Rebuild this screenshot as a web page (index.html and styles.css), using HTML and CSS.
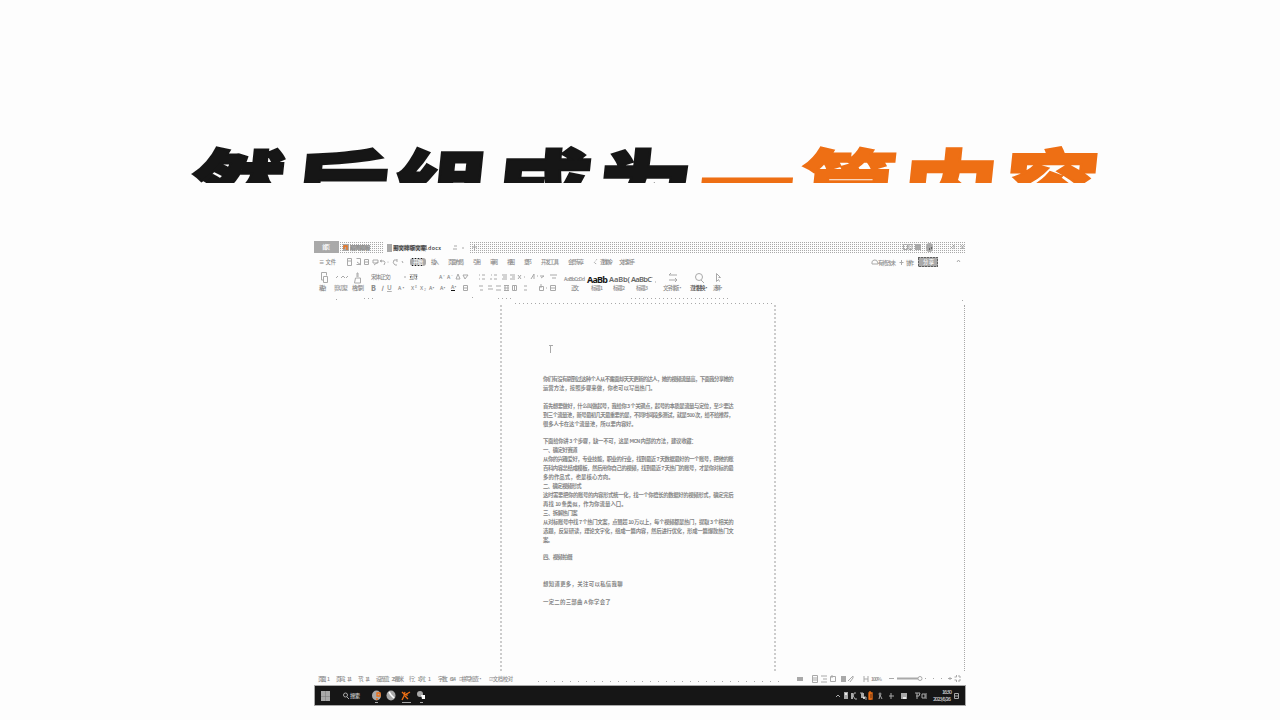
FILE: index.html
```html
<!DOCTYPE html>
<html lang="zh-CN">
<head>
<meta charset="utf-8">
<title>然后组成为一篇内容</title>
<link rel="stylesheet" href="styles.css">
</head>
<body>
<h1 class="headline"><span class="headline-text">然后组成为<span class="accent">一篇内容</span></span></h1>
<main class="window">
<svg class="titlebar" width="651" height="13" viewBox="314 241 651 13">
<defs><pattern id="rows" width="2" height="2" patternUnits="userSpaceOnUse"><path d="M0 0h1v1h-1z" fill="#a9a9a9"/></pattern></defs>
<path class="fill" d="M314 241h25v12h-25z"/><text class="white" x="322" y="249" textLength="8">首页</text>
<path fill="url(#rows)" d="M339 242h44v11h-44zM469 242h496v11h-496z"/>
<path class="fill" d="M343 244h6v7h-6zM387 244h5v8h-5zM350 245h20v5h-20z"/><path class="orange-line" d="M344 249v-3h3v4"/>
<text x="350" y="250" textLength="20">稻壳模板</text>
<path class="fill" d="M394 245h33v5h-33z"/><text class="dark" x="393" y="250" textLength="48">图文排版文案.docx</text>
<path class="line" d="M454 246h3M453 249h4M462 248h2M472 247h5M474.5 244v6M903.500 244.500h4v5h-4zM909 244.500h3v5h-3zM950 249l4-4v4M961 245l3 4M964 245l-3 4"/>
<path class="fill" d="M915 244h6v6h-6z"/><ellipse class="fill" cx="929.500" cy="247.500" rx="3.500" ry="4.500"/><path class="mark" d="M929 249h1M931 248h1"/>
</svg>
<svg class="menubar" width="651" height="15" viewBox="314 254 651 15">
<text x="319" y="264.500" textLength="17">≡ 文件</text>
<path class="line" d="M347.500 258.500h4v7h-4zM348 261h3M356.500 258.500h4v6h-4M357 262l4 3M364.500 259.500h4v5h-4zM364 262h5M373 260h5v3h-5zM374 265l4-3M382 260l-2 1 2 1M380 261h4q2 1 0 4M397 260h-3q-2 3 1 5h2M397 259v3M402 261l1 2"/>
<circle class="fill" cx="388" cy="262" r=".6"/>
<rect class="fill" x="410" y="258" width="16" height="8" rx="3"/><path class="dashes" d="M412 258.500h12M412 265.500h12"/><text class="white" x="413" y="264.500" textLength="10">开始</text>
<text x="431" y="264.500" textLength="8">插入</text><text x="448" y="264.500" textLength="16">页面布局</text><text x="473" y="264.500" textLength="8">引用</text><text x="490" y="264.500" textLength="8">审阅</text><text x="507" y="264.500" textLength="8">视图</text><text x="524" y="264.500" textLength="8">章节</text><text x="541" y="264.500" textLength="18">开发工具</text><text x="568" y="264.500" textLength="16">会员专享</text>
<path class="faint" d="M597 259l-3 4 3 1"/><text x="600" y="264" textLength="13">查找命令</text><text x="619" y="264" textLength="16">文档助手</text>
<path class="line" d="M872 264q-1-3 2-4t4 3v1zM899.500 262.500h4M901.500 260v5"/><text x="878" y="265" textLength="18">有修改未</text><text x="906" y="265" textLength="8">协作</text>
<path class="fill" d="M918 257h20v10h-20z"/><path class="dashes" d="M918.500 257.500h19v9h-19z"/><text class="white" x="923" y="264.500" textLength="11">分享</text><path class="line" d="M957 262l1.500-2 1.500 2"/>
</svg>
<svg class="ribbon" width="651" height="36" viewBox="314 269 651 36">
<path class="line" d="M321.500 274v-1.500h5v3M321.500 274v6h2M323.500 276.500h4v6h-4zM355.500 278h5v5h-6zM358 277v-4h-1v4M336 278l2-2M341 278l2-2 2 2M346 278l2-2M404 277h2"/>
<text x="371" y="279" textLength="20">宋体 (正文)</text><text x="409" y="279" textLength="9">五号</text><path class="mark" d="M410 277h1M416 277h1"/>
<text x="439" y="279" textLength="6">A⁺</text><text x="447" y="279" textLength="6">A⁻</text><path class="line" d="M456 279l2-5 2 5zM463 275h5l-3 4z"/>
<path class="list" d="M479 275h1M482 275h3M479 279h1M482 279h3M491 275h1M494 275h3M490 279h2M494 279h3M502 275h5M503 277h4M502 279h5M510 275h5M512 277h3M510 279h5"/>
<path class="line" d="M518 275l3 4M521 275l-3 4M524 277h1M531 279l3-5v5M537 276h1M540 276h4l-3 2M550 275h7M552 278h4"/>
<text x="564" y="281" textLength="21">AaBbCcDd</text><text class="style-main" x="587" y="283" textLength="21">AaBb</text><text class="style-next" x="609" y="282" textLength="21">AaBb(</text><text class="style-next" x="631" y="282" textLength="21">AaBbC</text><path class="faint" d="M652 277v2M655 282h1"/>
<path class="line" d="M669 275h8M671 273l-2 2M669 280h8M675 278l2 2-2 2M716.500 273.500v8l2-2 1 2M716.500 273.500l4 4h-2"/><circle class="line" cx="699" cy="277" r="3.500"/><path class="line" d="M701 280l3 3"/>
<text x="319" y="290" textLength="9">粘贴·</text><text x="334" y="290" textLength="14">剪切复</text><text x="352" y="290" textLength="12">格式刷</text>
<text class="bold" x="371" y="291">B</text><text class="italic" x="381" y="291">I</text><text class="underline" x="387" y="290.500">U</text><text x="398" y="290" textLength="8">A·</text><text x="411" y="290" textLength="6">X²</text><text x="420" y="290" textLength="6">X₂</text><text x="429" y="290" textLength="7">A·</text><text x="440" y="290" textLength="7">A·</text><text x="451" y="289" textLength="7">A·</text><path class="dark-line" d="M451 290.500h4"/><path class="line" d="M463.500 285.500h4v5h-4zM463 288h4"/>
<path class="line" d="M479 286h4M480 290h3M488 286h4M488 289h5M496 286h5M496 290h5M504 285.500h5M504 288h5M504 290.500h5M505 285v6M508 285v6M512.500 285.500h4v5h-4zM514.500 285v6M524 286h3M524 290h3M539.500 286.500h4v4h-4zM541 284v4M546 288h1M550.500 285.500h5v5h-5zM550 288h5"/>
<text x="571" y="290" textLength="8">正文</text><text x="591" y="290" textLength="12">标题 1</text><text x="613" y="290" textLength="12">标题 2</text><text x="636" y="290" textLength="12">标题 3</text><text x="663" y="290" textLength="20">文字排版·</text><text class="medium" x="690" y="290" textLength="19">查找替换·</text><text x="713" y="290" textLength="11">选择·</text>
<path class="dots" d="M336 299.500h2M364 298.500h10M472 297.500h2M498 298.500h14M631 298.500h98M515 303.500h259M962 300.500h3"/>
</svg>
<section class="workspace"><article class="page">
<svg class="cursor" width="5" height="9"><path class="line" d="M1 .5h4M2.500 1v7"/></svg>
<p>你们有没有刷到过这种个人从不露面却天天更新的达人，她的视频流量高，下面我分享她的</p>
<p class="w112">运营方法，按照步骤来做，你也可以写出热门。</p>
<p class="gap">首先想要做好，什么叫做起号，我给你 3 个关键点，起号的本质是流量与定位，至少要达</p>
<p>到三个流量池，新号最初几天最重要的是，不同时间段多测试，就是 500 次，给不给推荐，</p>
<p class="w93">很多人卡在这个流量池，所以要内容好。</p>
<p class="gap w153">下面给你讲 3 个步骤，缺一不可，这是 MCN 内部的方法，建议收藏：</p>
<p class="w34">一、确定好赛道</p>
<p>从你的兴趣爱好，专业技能，职业的行业，找到最近 7 天数据最好的一个账号，把他的账</p>
<p>百科内容总结成模板，然后用你自己的视频，找到最近 7 天热门的账号，才是你对标的最</p>
<p class="w70">多的作品式，也是核心方向。</p>
<p class="w38">二、确定视频形式</p>
<p>这时需要把你的账号的内容形式统一化，找一个你擅长的数据好的视频形式，确定完后</p>
<p class="w83">再找 10 条类似，作为你流量入口。</p>
<p class="w34">三、拆解热门案</p>
<p>从对标账号中找 7 个热门文案，点赞超 10 万以上，每个视频都是热门，提取 3 个相关的</p>
<p>选题，反复研读，理论文字化，组成一篇内容，然后进行优化，形成一篇爆款热门文</p>
<p class="w7">案。</p>
<p class="gap w29">四、视频拍摄</p>
<p class="double w79">想知道更多，关注可以私信我聊</p>
<p class="gap w67">一定二的三部曲 A 你学会了</p>
</article></section>
<svg class="status" width="651" height="14" viewBox="314 671 651 14">
<text x="318" y="681" textLength="12">页面：1</text><text x="336" y="681" textLength="16">页码：1/1</text><text x="358" y="681" textLength="12">节：1/1</text><text x="376" y="681" textLength="28">设置值：2.5厘米</text><text x="409" y="681" textLength="22">行：1 列：1</text><text x="438" y="681" textLength="18">字数：614</text><text x="459" y="681" textLength="24">☑拼写检查·</text><text x="489" y="681" textLength="24">☑文档校对</text>
<path class="fill" d="M797 677h6v4h-6zM841 676h5v6h-5z"/><path class="line" d="M812.500 675.500h5v7h-5zM813 678h5M813 680h5M821 676h6M823 679h4M821 682h6M830.500 676.500h5v5h-5zM832 675v3M848 681l5-5v2l-3 4M864 676v6M868 676v6M864 679h4M889 678.500h5"/><text x="871" y="681" textLength="11">100%</text><path class="slider" d="M897 678.500h21"/><circle class="line" cx="920" cy="678.500" r="2"/><path class="faint-dots" d="M538 681.500h248M925 678.500h22"/><path class="line" d="M948 678.500h4M950 677v3M956.500 675v2h-2M959 675v2h2M956.500 682v-2h-2M959 682v-2h2"/>
</svg>
<svg class="taskbar" width="652" height="21" viewBox="314 684 652 21">
<path class="line" d="M314 684.500h652M314.500 684v21M965.500 684v21M314 704.500h652"/>
<path class="fill" d="M321 690h9v10h-9z"/><path class="grid-line" d="M325.500 690v10M321 695.500h9"/><circle class="light-line" cx="345.500" cy="694" r="2"/><path class="light-line" d="M347 696l2 2"/><text class="light" x="350" y="697.500" textLength="10">搜索</text>
<ellipse class="fill" cx="376.500" cy="694.500" rx="4.500" ry="5"/><path class="orange-line" d="M377 692h3v3h-3zM376 698h2"/><ellipse class="fill" cx="391" cy="694.500" rx="4.500" ry="5"/><path class="white-line" d="M389 691l2 3 3 3"/><path class="orange-line" d="M402 691l3 3 5-3M405 691l-1 4-2 4M405 695l3 3M407 692v3"/><path class="line" d="M375 701.500h3M402 701.500h9M420 701.500h3"/><ellipse class="fill" cx="420" cy="693" rx="3" ry="3"/><path class="white" d="M421 694h4v4h-3z"/>
<path class="light-line" d="M836 696l2-2 2 2M856 692h-2q-2 3 1 6h2M860 692h3v4h3v3M889 695h5M891 692v6M915 692h5l-1 3h-3M917 692v6M922 693h3v4h-3zM926 692v6"/><path class="fill" d="M844 691h4v7h-4zM851 692h2v6h-2zM861 692h3v5h-3zM901 692h6v6h-6z"/><path class="orange-line" d="M869 692h3v6h-3zM870 690v9"/><path class="white-line" d="M845 693h2M863 697h2M903 697h3"/><circle class="light-line" cx="880" cy="693" r="1"/><path class="light-line" d="M879 698l1-4 2 4"/>
<text class="light" x="942" y="693.500" textLength="10">16:30</text><text class="light" x="933" y="700.500" textLength="18">2023/6/26</text><path class="light-line" d="M954.500 692.500h4v5h-4zM955 695h3"/>
</svg>
</main>
</body>
</html>
```
FILE: styles.css
```css
* { box-sizing: border-box; }
body { margin: 0; width: 1280px; height: 720px; overflow: hidden; background: #fdfdfd; color: #a9a9a9; font-family: "Noto Sans CJK SC", sans-serif; }
.headline { margin: 0; padding-left: 191px; margin-top: 145px; width: 1280px; height: 38px; overflow: hidden; color: #161616; }
.headline-text { display: block; width: 930px; height: 72px; line-height: 72px; font-size: 95px; font-weight: 900; letter-spacing: 6.700px; white-space: nowrap; -webkit-text-stroke: 2.500px currentColor; transform: skewX(-6deg) scaleY(.82); transform-origin: left center; }
.accent { color: #ee6f14; }
.window { display: flex; flex-direction: column; width: 652px; margin-top: 58px; margin-left: 314px; }
svg { display: block; flex: none; }
text { font: 500 5.300px "Noto Sans CJK SC", sans-serif; fill: #8c8c8c; transform: translateY(-.5px); }
.fill { fill: #a9a9a9; }
.line, .faint, .list { fill: none; stroke: #a9a9a9; stroke-width: 1; }
.faint { stroke-dasharray: 1 1; }
.list { stroke-width: 1.200; }
.white { fill: #fdfdfd; }
.dark { fill: #333; }
.medium { fill: #555; }
.mark, .dark-line { fill: none; stroke: #161616; }
.dashes { fill: none; stroke: #161616; stroke-dasharray: 1 2; }
.dots { fill: none; stroke: #a9a9a9; stroke-dasharray: 1 3; }
.faint-dots { fill: none; stroke: #a9a9a9; stroke-dasharray: 1 7; }
.orange-line { fill: none; stroke: #ee6f14; stroke-width: 1.300; }
.white-line { fill: none; stroke: #fdfdfd; stroke-width: 1.600; }
.light { fill: #ccc; }
.light-line { fill: none; stroke: #a9a9a9; }
.grid-line { fill: none; stroke: #777; stroke-width: .5; }
.slider { stroke: #a9a9a9; stroke-width: 2; }
.style-main { font: 700 9px "Noto Sans", sans-serif; fill: #161616; }
.style-next { font: 600 7.500px "Noto Sans", sans-serif; fill: #666; }
.bold { font-weight: 900; font-size: 7px; }
.italic { font-style: italic; font-size: 7px; }
.underline { text-decoration: underline; font-size: 6.500px; }
.workspace { display: flex; justify-content: space-between; width: 651px; height: 366px; padding-left: 186px; border-right: 1px dotted #a9a9a9; }
.page { width: 276px; height: 366px; padding: 40px 42px 0 41px; border-right: 2px dotted #ccc; border-left: 2px dotted #ccc; }
.cursor { margin-left: 5px; margin-bottom: 21px; }
.page p { width: 190px; height: 8.930px; margin: 0; font-size: 5.400px; line-height: 9px; color: #858585; font-weight: 600; letter-spacing: -.7px; white-space: nowrap; text-align: justify; text-align-last: justify; text-justify: inter-character; }
.page p.gap { margin-top: 8.930px; }
.page p.double { margin-top: 17.860px; }
.page p.w112 { width: 112px; }
.page p.w93 { width: 93px; }
.page p.w153 { width: 153px; }
.page p.w34 { width: 34px; }
.page p.w70 { width: 70px; }
.page p.w38 { width: 38px; }
.page p.w83 { width: 83px; }
.page p.w7 { width: 7px; }
.page p.w29 { width: 29px; }
.page p.w79 { width: 79px; }
.page p.w67 { width: 67px; }
.taskbar { background: #161616; }
```
